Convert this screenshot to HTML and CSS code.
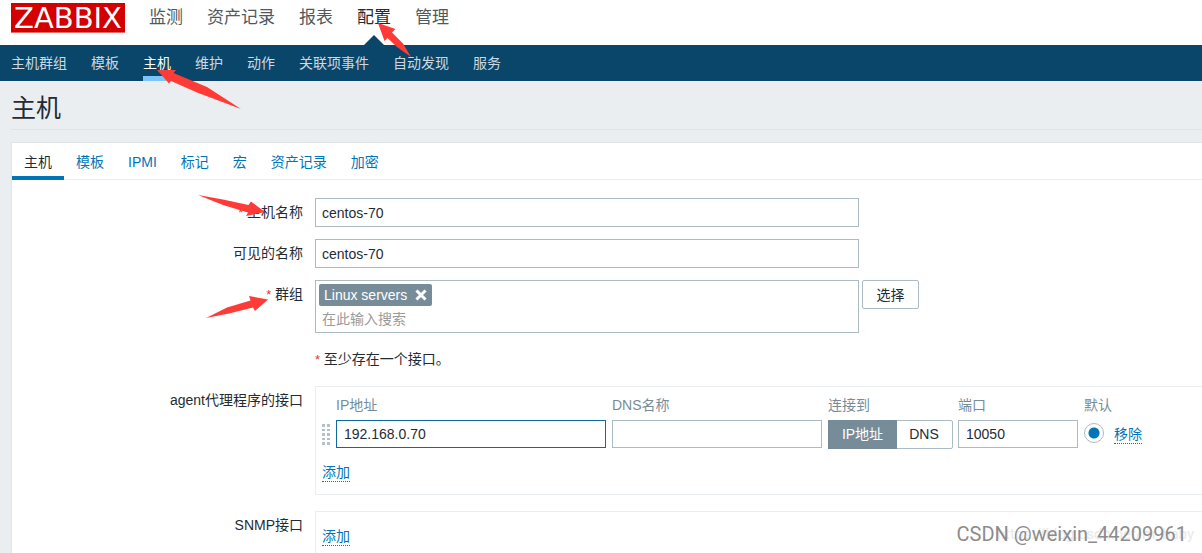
FILE: index.html
```html
<!DOCTYPE html>
<html lang="zh-CN">
<head>
<meta charset="utf-8">
<title>主机</title>
<link rel="stylesheet" href="styles.css">
</head>
<body>
<header class="top">
  <a class="logo" href="#">ZABBIX</a>
  <nav class="main-nav">
    <a href="#">监测</a>
    <a href="#">资产记录</a>
    <a href="#">报表</a>
    <a class="current" href="#">配置</a>
    <a href="#">管理</a>
  </nav>
</header>
<nav class="sub-nav">
  <a href="#">主机群组</a>
  <a href="#">模板</a>
  <a class="current" href="#">主机</a>
  <a href="#">维护</a>
  <a href="#">动作</a>
  <a href="#">关联项事件</a>
  <a href="#">自动发现</a>
  <a href="#">服务</a>
</nav>
<main class="page">
  <h1 class="title">主机</h1>
  <form class="card">
    <nav class="tabs">
      <a class="current" href="#">主机</a>
      <a href="#">模板</a>
      <a href="#">IPMI</a>
      <a href="#">标记</a>
      <a href="#">宏</a>
      <a href="#">资产记录</a>
      <a href="#">加密</a>
    </nav>
    <div class="fields">
      <label class="label required" for="host">主机名称</label>
      <input class="text wide" id="host" type="text" value="centos-70">

      <label class="label" for="visible">可见的名称</label>
      <input class="text wide" id="visible" type="text" value="centos-70">

      <label class="label required" for="groups">群组</label>
      <div class="group-row">
        <div class="multiselect wide">
          <span class="tag">Linux servers
            <button class="tag-remove" type="button" aria-label="移除 Linux servers"><svg viewBox="0 0 12 12" width="12" height="12"><path d="M2.5 2.5L9.5 9.5M9.5 2.5L2.5 9.5" stroke="currentColor" stroke-width="3" stroke-linecap="square" fill="none"/></svg></button>
          </span>
          <input class="search" id="groups" type="text" placeholder="在此输入搜索">
        </div>
        <button class="button" type="button">选择</button>
      </div>

      <p class="note required">至少存在一个接口。</p>

      <span class="label">agent代理程序的接口</span>
      <section class="box">
        <table class="interfaces">
          <thead>
            <tr><th class="c-drag"></th><th class="c-ip">IP地址</th><th class="c-dns">DNS名称</th><th class="c-connect">连接到</th><th class="c-port">端口</th><th class="c-default">默认</th><th></th></tr>
          </thead>
          <tbody>
            <tr>
              <td><svg class="drag" viewBox="0 0 8 22" width="8" height="22" fill="#b4c1c9"><path d="M0 0h3v3H0zM5 0h3v3H5zM0 5h3v2H0zM5 5h3v2H5zM0 9h3v3H0zM5 9h3v3H5zM0 14h3v2H0zM5 14h3v2H5zM0 18h3v3H0zM5 18h3v3H5z"/></svg></td>
              <td><input class="text small focused" type="text" aria-label="IP地址" value="192.168.0.70"></td>
              <td><input class="text small" type="text" aria-label="DNS名称"></td>
              <td><div class="segmented">
                <input type="radio" name="connect" id="by-ip" checked><label for="by-ip">IP地址</label>
                <input type="radio" name="connect" id="by-dns"><label for="by-dns">DNS</label>
              </div></td>
              <td><input class="text small" type="text" aria-label="端口" value="10050"></td>
              <td><input class="radio" type="radio" name="default" aria-label="默认" checked></td>
              <td><button class="link" type="button">移除</button></td>
            </tr>
          </tbody>
        </table>
        <button class="link add" type="button">添加</button>
      </section>

      <span class="label snmp-label">SNMP接口</span>
      <section class="box snmp">
        <button class="link" type="button">添加</button>
      </section>
    </div>
  </form>
</main>
<svg class="arrows" viewBox="0 0 1202 553" width="1202" height="553" fill="#ff3b38" aria-hidden="true">
  <path d="M378 23L395.500 29L392 32.500L403 43.500L411 57L397 47L387.500 38L384.500 41Z"/>
  <path d="M157 70L176 70L173.500 73L207 87L241 109L197 92.500L171 81L169 83.500Z"/>
  <path d="M198 195L223 199.500L248.500 205L251 201.500L265 212L246 216L248 212.500L223 205Z"/>
  <path d="M268 299.500L249 296L250.500 300.500L227 307.500L206 318L229 313.500L253 307.500L255 311Z"/>
</svg>
<div class="watermark"><span class="faint">https://blog.csdn.net/m_baby</span>CSDN @weixin_44209961</div>
</body>
</html>
```
FILE: styles.css
```css
* { box-sizing: border-box; }
body {
  margin: 0;
  min-height: 100vh;
  overflow: hidden;
  position: relative;
  display: flex;
  flex-direction: column;
  background: #ebeef0;
  color: #1f2c33;
  font: 14px/20px "Liberation Sans", "Noto Sans CJK SC", sans-serif;
}
a { text-decoration: none; color: inherit; }
button, input { font: inherit; color: inherit; margin: 0; }
button { padding: 0; cursor: pointer; }

.top {
  display: flex;
  align-items: flex-start;
  gap: 24px;
  height: 45px;
  padding: 3px 11px 0;
  background: #fff;
}
.logo {
  width: 114px;
  height: 30px;
  background: #d40000;
  border-bottom: 1px solid #e66a6a;
  color: #fff;
  font: 29px/30px "DejaVu Sans", sans-serif;
  text-align: center;
}
.main-nav { display: flex; gap: 24px; font-size: 17px; line-height: 30px; color: #4f5a60; }
.main-nav a { height: 42px; }
.main-nav .current { position: relative; color: #1f2c33; }
.main-nav .current::after {
  content: "";
  position: absolute;
  bottom: 0;
  left: 50%;
  margin-left: -10px;
  border: 10px solid transparent;
  border-top: 0;
  border-bottom-color: #0a466a;
}

.sub-nav { display: flex; gap: 24px; height: 36px; padding: 0 11px; background: #0a466a; color: #ccd9e1; line-height: 36px; }
.sub-nav .current { color: #fff; border-bottom: 5px solid #7ec5f7; }

.page { flex: 1; display: flex; flex-direction: column; padding-left: 11px; }
.title { margin: 0 0 12px; height: 49px; border-bottom: 1px solid #dfe4e7; font-size: 25px; font-weight: 400; line-height: 54px; }

.card { flex: 1; background: #fff; border: solid #dfe4e7; border-width: 1px 0 0 1px; }
.tabs { display: flex; border-bottom: 1px solid #ebeef0; color: #0275b8; line-height: 38px; height: 37px; }
.tabs a { padding: 0 12px; height: 37px; }
.tabs .current { color: #1f2c33; border-bottom: 4px solid #0275b8; }

.fields { display: grid; grid-template-columns: 291px 1fr; column-gap: 12px; row-gap: 12px; padding-top: 18px; }
.label { text-align: right; line-height: 28px; height: 28px; }
.required::before { content: "* "; color: #e33734; font-size: 13px; }
.text { height: 29px; padding: 0 6px; border: 1px solid #acbbc2; border-radius: 0; background: #fff; outline: 0; }
.wide { width: 544px; }
.group-row { display: flex; gap: 3px; align-items: flex-start; }
.multiselect { height: 53px; border: 1px solid #acbbc2; padding: 3px; }
.tag { display: flex; width: max-content; align-items: center; gap: 8px; height: 22px; padding: 0 5px; border-radius: 2px; background: #768d99; color: #fff; }
.tag-remove { display: flex; border: 0; background: none; color: #fff; }
.search { display: block; width: 100%; height: 26px; padding: 0 3px; border: 0; outline: 0; background: none; }
.search::placeholder { color: #9a9a9a; opacity: 1; }
.button { width: 57px; height: 29px; border: 1px solid #acbbc2; border-radius: 2px; background: #fff; }
.note { grid-column: 2; margin: 4px 0; line-height: 20px; }

.box { border: solid #ebeef0; border-width: 1px 0 1px 1px; padding: 5px 0 0 6px; height: 109px; }
.snmp { margin-top: 4px; padding-top: 15px; height: 42px; border-bottom: 0; }
.snmp-label { margin-top: 4px; }
.interfaces { border-collapse: collapse; table-layout: fixed; width: 840px; }
.interfaces th { padding: 0; height: 25px; text-align: left; font-weight: 400; color: #768d99; }
.interfaces td { padding: 3px 0 0; height: 32px; vertical-align: top; }
.c-drag { width: 14px; }
.c-ip { width: 276px; }
.c-dns { width: 216px; }
.c-connect { width: 130px; }
.c-port { width: 126px; }
.c-default { width: 30px; }
.drag { display: block; margin-top: 4px; }
.interfaces .small { display: block; width: calc(100% - 6px); height: 28px; padding: 0 7px; }
.interfaces .focused { border-color: #0f6a9f; }
.segmented { display: flex; width: 125px; height: 29px; border: 1px solid #acbbc2; border-radius: 2px; }
.segmented input { position: absolute; opacity: 0; }
.segmented label { flex: 1; text-align: center; line-height: 27px; }
.segmented label:first-of-type { flex: 0 0 67px; }
.segmented input:checked + label { background: #768d99; color: #fff; outline: 1px solid #768d99; }
.radio { appearance: none; display: block; width: 20px; height: 20px; margin-top: 3px; border: 1px solid #acbbc2; border-radius: 50%; background: radial-gradient(circle, #0275b8 5px, #fff 6px); }
.link { display: block; border: 0; border-bottom: 1px dotted #0275b8; background: none; color: #0275b8; line-height: 18px; }
.interfaces .link { margin-top: 5px; }
.add { margin-top: 14px; }

.arrows { position: absolute; left: 0; top: 0; pointer-events: none; }
.watermark { position: absolute; z-index: 1; right: 15px; bottom: 7px; font: 20px/24px Roboto, "Liberation Sans", sans-serif; color: #8c8c8c; white-space: nowrap; }
.faint { position: absolute; z-index: -1; right: -7px; bottom: 0; font-size: 15px; color: #e9e9e9; }
```
